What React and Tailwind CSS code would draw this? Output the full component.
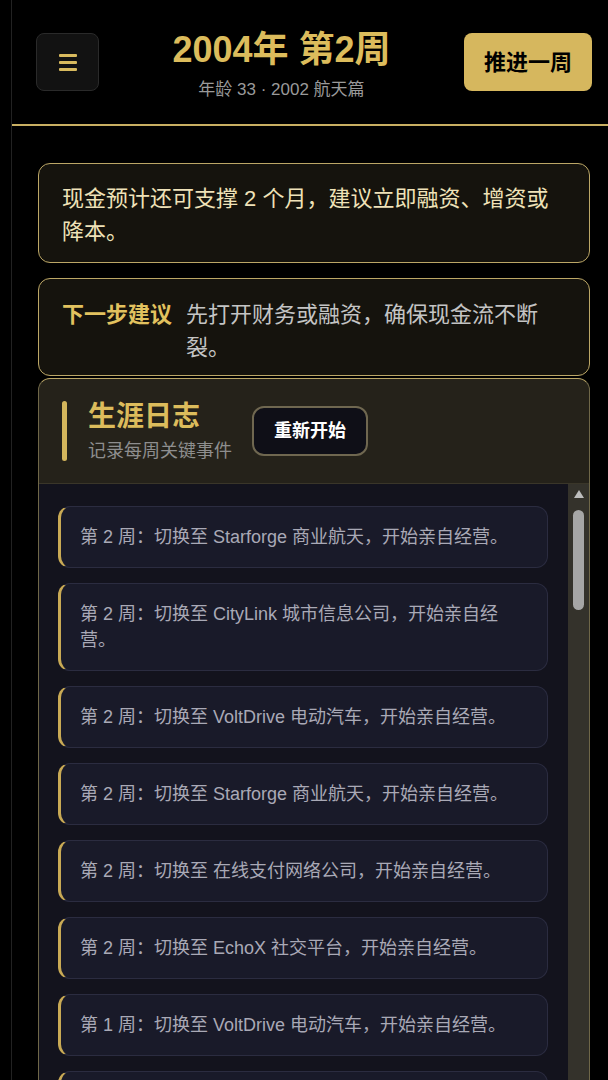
import React from "react";

const logs = [
  "第 2 周：切换至 Starforge 商业航天，开始亲自经营。",
  "第 2 周：切换至 CityLink 城市信息公司，开始亲自经营。",
  "第 2 周：切换至 VoltDrive 电动汽车，开始亲自经营。",
  "第 2 周：切换至 Starforge 商业航天，开始亲自经营。",
  "第 2 周：切换至 在线支付网络公司，开始亲自经营。",
  "第 2 周：切换至 EchoX 社交平台，开始亲自经营。",
  "第 1 周：切换至 VoltDrive 电动汽车，开始亲自经营。",
  "第 1 周：切换至 CityLink 城市信息公司，开始亲自经营。",
];

const MenuIcon = () => (
  <svg width="18" height="17" viewBox="0 0 18 17" fill="#d8ba5e">
    <rect x="0" y="0" width="18" height="3" rx="1" />
    <rect x="0" y="7" width="18" height="3" rx="1" />
    <rect x="0" y="14" width="18" height="3" rx="1" />
  </svg>
);

const LogItem = ({ text }) => (
  <div className="rounded-xl border border-l-[3px] border-[#2b2c40] border-l-[#c9aa55] bg-[#191a29] py-[17px] pl-[19px] pr-[32px] text-[18px] leading-[26px] text-[#a9a9b6]">
    {text}
  </div>
);

export default function App() {
  return (
    <div className="h-screen overflow-hidden bg-black font-['Liberation_Sans','Noto_Sans_CJK_SC',sans-serif]">
      <div className="ml-[11px] h-full border-l border-[#222222] bg-black">
        <header className="flex h-[126px] items-center border-b-2 border-[#c9af62] pl-6 pr-4">
          <button className="flex h-[58px] w-[63px] items-center justify-center rounded-lg border border-[#2a2a2a] bg-[#121212]">
            <MenuIcon />
          </button>
          <div className="mt-[4px] flex-1 text-center">
            <h1 className="text-[36px] font-bold leading-[43px] text-[#dcbc5c]">2004年 第2周</h1>
            <p className="mt-[9px] text-[17px] leading-[20px] text-[#9a9a9a]">年龄 33 · 2002 航天篇</p>
          </div>
          <button className="h-[58px] rounded-lg bg-[#d6b75e] px-[20px] text-[22px] font-bold text-black">
            推进一周
          </button>
        </header>

        <main className="pl-[26px] pr-[18px] pt-[37px]">
          <div className="rounded-xl border-[1.5px] border-[#bca766] bg-[#15130d] px-[23px] pb-[14px] pt-[18px] text-[22px] leading-[33px] text-[#efe2b8]">
            现金预计还可支撑 2 个月，建议立即融资、增资或降本。
          </div>

          <div className="mt-[15px] flex gap-[14px] rounded-xl border-[1.5px] border-[#bca766] bg-[#15130d] px-[23px] pb-[11px] pt-[19px] text-[22px] leading-[33px]">
            <span className="whitespace-nowrap font-bold text-[#e2c25f]">下一步建议</span>
            <span className="text-[#c4c4c4]">先打开财务或融资，确保现金流不断裂。</span>
          </div>

          <section className="mt-[2px] overflow-hidden rounded-xl border-[1.5px] border-[#6f6748] border-t-[#bca766] bg-[#25221a]">
            <div className="flex items-center border-b border-[#3a3629] px-[23px] py-[22px]">
              <div className="flex gap-[21px]">
                <div className="w-[5px] rounded-full bg-[#d4b65c]" />
                <div>
                  <h2 className="text-[28px] font-bold leading-[32px] text-[#dcbc5c]">生涯日志</h2>
                  <p className="mt-[8px] text-[18px] leading-[20px] text-[#8e8e8e]">记录每周关键事件</p>
                </div>
              </div>
              <button className="ml-[20px] h-[50px] rounded-xl border-2 border-[#6f6750] bg-[#0f0f17] px-[20px] text-[18px] font-bold text-white">
                重新开始
              </button>
            </div>

            <div className="flex h-[640px] bg-[#13131d]">
              <div className="flex-1 overflow-hidden">
                <div className="flex flex-col gap-[15px] pl-[19px] pr-[20px] pt-[22px]">
                  {logs.map((text, i) => (
                    <LogItem key={i} text={text} />
                  ))}
                </div>
              </div>
              <div className="flex w-[21px] flex-col items-center bg-[#34322b] pt-[5px]">
                <svg width="12" height="10" viewBox="0 0 12 10">
                  <path d="M6 1 L11 9 L1 9 Z" fill="#bdbdbd" />
                </svg>
                <div className="mt-[11px] h-[100px] w-[11px] rounded-full bg-[#a6a6a6]" />
              </div>
            </div>
          </section>
        </main>
      </div>
    </div>
  );
}
